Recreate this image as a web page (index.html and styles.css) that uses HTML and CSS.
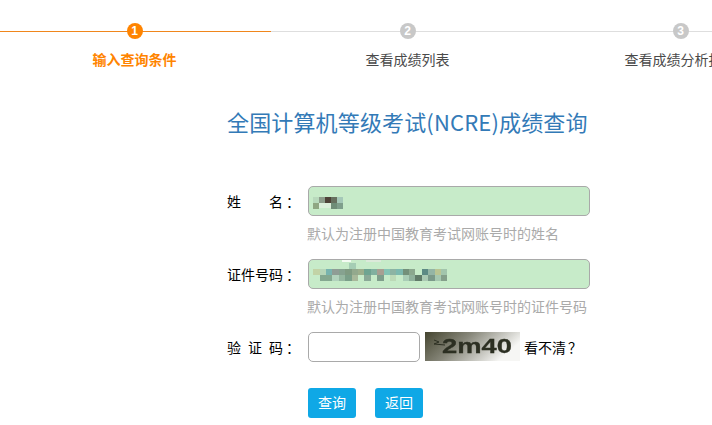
FILE: index.html
```html
<!DOCTYPE html>
<html lang="zh-CN">
<head>
<meta charset="utf-8">
<title>全国计算机等级考试(NCRE)成绩查询</title>
<link rel="stylesheet" href="styles.css">
</head>
<body>
<div class="stepper">
  <div class="step active"><div class="track"><span class="dot">1</span></div><div class="step-label">输入查询条件</div></div>
  <div class="step"><div class="track"><span class="dot">2</span></div><div class="step-label">查看成绩列表</div></div>
  <div class="step"><div class="track"><span class="dot">3</span></div><div class="step-label">查看成绩分析报告</div></div>
</div>
<main class="panel">
  <h1 class="title">全国计算机等级考试(NCRE)成绩查询</h1>
  <div class="row name-row">
    <span class="label spread-name"><span>姓</span><span>名</span><span class="colon">：</span></span>
    <div class="field filled">
      <svg class="mosaic mosaic-name" width="36" height="18" viewBox="0 0 36 18" shape-rendering="crispEdges">
        <rect x="4" y="3" width="6" height="6" fill="#b8d9bc"/><rect x="10" y="3" width="6" height="6" fill="#8c9c8a"/>
        <rect x="16" y="3" width="6" height="6" fill="#4e4238"/><rect x="22" y="3" width="6" height="6" fill="#66705f"/>
        <rect x="28" y="3" width="6" height="6" fill="#a5c8b8"/>
        <rect x="4" y="9" width="6" height="6" fill="#8fa683"/><rect x="10" y="9" width="12" height="5" fill="#dcefdb"/>
        <rect x="22" y="9" width="6" height="6" fill="#6f8d78"/><rect x="28" y="9" width="6" height="6" fill="#7f9f8c"/>
      </svg>
    </div>
  </div>
  <p class="hint">默认为注册中国教育考试网账号时的姓名</p>
  <div class="row id-row">
    <span class="label">证件号码<span class="colon">：</span></span>
    <div class="field filled">
      <svg class="mosaic mosaic-id" width="149" height="24" viewBox="0 0 140 24" preserveAspectRatio="none" shape-rendering="crispEdges">
        <rect x="31" y="0" width="8" height="2" fill="#f4fbf3"/><rect x="54" y="0" width="14" height="2" fill="#dce9da"/>
        <rect x="38" y="3" width="6" height="6" fill="#a5cdb4"/>
        <rect x="4" y="9" width="6" height="6" fill="#c2d3a6"/><rect x="10" y="9" width="6" height="6" fill="#b6d5b8"/>
        <rect x="16" y="9" width="6" height="6" fill="#78b3ae"/><rect x="22" y="9" width="6" height="6" fill="#8f9d95"/>
        <rect x="28" y="9" width="6" height="6" fill="#86a290"/><rect x="34" y="9" width="6" height="6" fill="#7f9b82"/>
        <rect x="40" y="9" width="6" height="6" fill="#93a98d"/><rect x="46" y="9" width="6" height="6" fill="#9cae8c"/>
        <rect x="52" y="9" width="6" height="6" fill="#6fa491"/><rect x="58" y="9" width="6" height="6" fill="#81b09f"/>
        <rect x="64" y="9" width="6" height="6" fill="#a89f92"/><rect x="70" y="9" width="6" height="6" fill="#84c3b4"/>
        <rect x="76" y="9" width="6" height="6" fill="#8cb3a3"/><rect x="82" y="9" width="6" height="6" fill="#7cb8ae"/>
        <rect x="88" y="9" width="6" height="6" fill="#73907a"/><rect x="94" y="9" width="6" height="6" fill="#8ba78e"/>
        <rect x="106" y="9" width="6" height="6" fill="#5d8a84"/><rect x="112" y="9" width="6" height="6" fill="#94b5a5"/>
        <rect x="118" y="9" width="6" height="6" fill="#b9c593"/><rect x="124" y="9" width="6" height="6" fill="#a2c5ac"/>
        <rect x="10" y="15" width="12" height="6" fill="#84a890"/><rect x="22" y="15" width="6" height="6" fill="#b1d2bc"/>
        <rect x="28" y="15" width="6" height="6" fill="#95b7a0"/><rect x="34" y="15" width="6" height="6" fill="#7a9f89"/>
        <rect x="40" y="15" width="6" height="6" fill="#a8b89a"/><rect x="52" y="15" width="6" height="6" fill="#8aa997"/>
        <rect x="64" y="15" width="6" height="6" fill="#7f9e8b"/><rect x="76" y="15" width="6" height="6" fill="#bcd9b7"/>
        <rect x="88" y="15" width="6" height="6" fill="#a9cdb6"/><rect x="94" y="15" width="6" height="6" fill="#8fb09b"/>
        <rect x="100" y="15" width="6" height="6" fill="#617b69"/><rect x="106" y="15" width="6" height="6" fill="#aac9b2"/>
        <rect x="112" y="15" width="6" height="6" fill="#7b9a8a"/><rect x="118" y="15" width="6" height="6" fill="#a6c8b0"/>
        <rect x="124" y="15" width="6" height="6" fill="#849f8a"/>
      </svg>
    </div>
  </div>
  <p class="hint">默认为注册中国教育考试网账号时的证件号码</p>
  <div class="row captcha-row">
    <span class="label spread-code"><span>验</span><span>证</span><span>码</span><span class="colon">：</span></span>
    <div class="field short"></div>
    <svg class="captcha" width="95" height="29" viewBox="0 0 95 29">
      <defs><linearGradient id="cg" x1="0" y1="0" x2="1" y2="0.35"><stop offset="0" stop-color="#44442f"/><stop offset="0.45" stop-color="#87877a"/><stop offset="1" stop-color="#f6f6f4"/></linearGradient></defs>
      <rect width="95" height="29" fill="url(#cg)"/>
      <path d="M9 8 L14 10 L9 12 L20 13" stroke="#2c2f22" fill="none"/>
      <text x="17" y="21" class="captcha-text" textLength="70" lengthAdjust="spacingAndGlyphs">2m40</text>
    </svg>
    <span class="unclear">看不清<span class="qmark">？</span></span>
  </div>
  <div class="actions">
    <button class="btn" type="button">查询</button>
    <button class="btn" type="button">返回</button>
  </div>
</main>
</body>
</html>
```
FILE: styles.css
```css
* { box-sizing: border-box; }
html, body { margin: 0; height: 100%; overflow: hidden; background: #fff; }
body { font-family: "Noto Sans CJK SC", "Liberation Sans", sans-serif; font-size: 14px; color: #000; width: 712px; }

.stepper { display: flex; width: 819px; margin-left: -2px; padding-top: 23px; }
.step { flex: 0 0 273px; text-align: center; }
.track { height: 16px; display: flex; justify-content: center; align-items: center; background: linear-gradient(#dedede, #dedede) 0 8px / 100% 1px no-repeat; }
.active .track { background-image: linear-gradient(#f0861c, #f0861c); }
.dot { width: 16px; height: 16px; border-radius: 50%; background: #c8c8c8; color: #fff; font: bold 12px/16px "Liberation Sans", sans-serif; }
.active .dot { background: #ff8400; }
.step-label { margin-top: 9px; line-height: 22px; color: #4a4a4a; white-space: nowrap; }
.active .step-label { color: #ff8400; font-weight: 700; }

.panel { padding-left: 227px; }
.title { margin: 36px 0 0; font-size: 22px; font-weight: 400; line-height: 30px; letter-spacing: 0.15px; color: #337ab7; white-space: nowrap; }

.row { display: flex; align-items: center; height: 30px; }
.name-row { margin-top: 50px; }
.id-row { margin-top: 16px; }
.captcha-row { margin-top: 16px; }
.label { width: 81px; flex: none; line-height: 30px; white-space: nowrap; }
.spread-name { display: flex; }
.spread-name span:first-child { width: 42px; }
.colon { margin-left: 3px; }
.spread-code { display: flex; }
.spread-code span { width: 21px; }
.spread-code span:nth-child(3) { width: 14px; }
.spread-code .colon { width: auto; }

.field { width: 282px; height: 30px; border: 1px solid #a9a9a9; border-radius: 5px; display: flex; align-items: center; background: #fff; }
.filled { background: #c7ebc9; }
.short { width: 112px; flex: none; }
.mosaic { display: block; }
.mosaic-name { margin-top: 4px; }
.mosaic-id { margin-top: -4px; }
.hint { margin: 7px 0 0 80px; line-height: 20px; color: #aaa; white-space: nowrap; }

.captcha { display: block; margin-left: 5px; flex: none; align-self: flex-start; }
.captcha-text { font-family: "Liberation Sans", sans-serif; font-size: 21px; font-weight: 700; fill: #2c2f22; stroke: #2c2f22; stroke-width: 0.3px; filter: blur(0.5px); }
.unclear { margin-left: 4px; line-height: 30px; align-self: flex-start; }
.qmark { margin-left: 2px; }

.actions { display: flex; gap: 19px; margin: 26px 0 0 81px; }
.btn { width: 48px; height: 30px; padding: 0 0 2px; border: 0; border-radius: 3px; background: #0fa8e6; color: #fff; font: inherit; line-height: 28px; }
```
